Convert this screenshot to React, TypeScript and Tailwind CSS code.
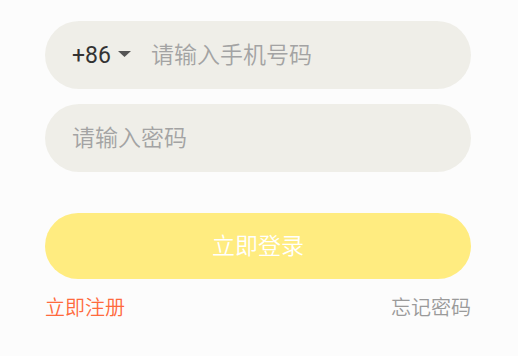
import * as React from "react"

const font = { fontFamily: '"Noto Sans CJK SC", "Noto Sans", sans-serif' }

export default function App() {
    const [phone, setPhone] = React.useState("")
    const [password, setPassword] = React.useState("")

    return (
        <div className="w-[518px] h-[356px] bg-[#fcfcfc] pt-[21px]" style={font}>
            <div className="ml-[45px] w-[426px] flex flex-col">
                <div className="h-[68px] rounded-full bg-[#efeee8] flex items-center pl-[27px] pr-6 pb-[3px]">
                    <span
                        className="mt-[4px] text-[23px] text-[#333333] leading-none"
                        style={{ fontFamily: "Roboto, sans-serif" }}
                    >
                        +86
                    </span>
                    <svg className="ml-[7px] mr-[20px] mt-[1px]" width="13" height="6" viewBox="0 0 13 6">
                        <path d="M0 0 H13 L6.5 6 Z" fill="#555555" />
                    </svg>
                    <input
                        className="flex-1 min-w-0 bg-transparent outline-none text-[23px] font-[350] text-[#333333] placeholder:text-[#a3a3a3]"
                        placeholder="请输入手机号码"
                        value={phone}
                        onChange={(e) => setPhone(e.target.value)}
                    />
                </div>
                <div className="mt-[15px] h-[68px] rounded-full bg-[#efeee8] flex items-center pl-[27px] pr-6 pb-[3px]">
                    <input
                        type="text"
                        className="flex-1 min-w-0 bg-transparent outline-none text-[23px] font-[350] text-[#333333] placeholder:text-[#a3a3a3]"
                        placeholder="请输入密码"
                        value={password}
                        onChange={(e) => setPassword(e.target.value)}
                    />
                </div>
                <button
                    type="button"
                    className="mt-[41px] h-[66px] rounded-full bg-[#ffec80] text-white text-[23px] font-[350] pb-[3px]"
                >
                    立即登录
                </button>
                <div className="mt-[13px] flex justify-between text-[20px] font-[350] leading-[30px]">
                    <span className="text-[#ff6a3d]">立即注册</span>
                    <span className="text-[#9a9a9a]">忘记密码</span>
                </div>
            </div>
        </div>
    )
}
